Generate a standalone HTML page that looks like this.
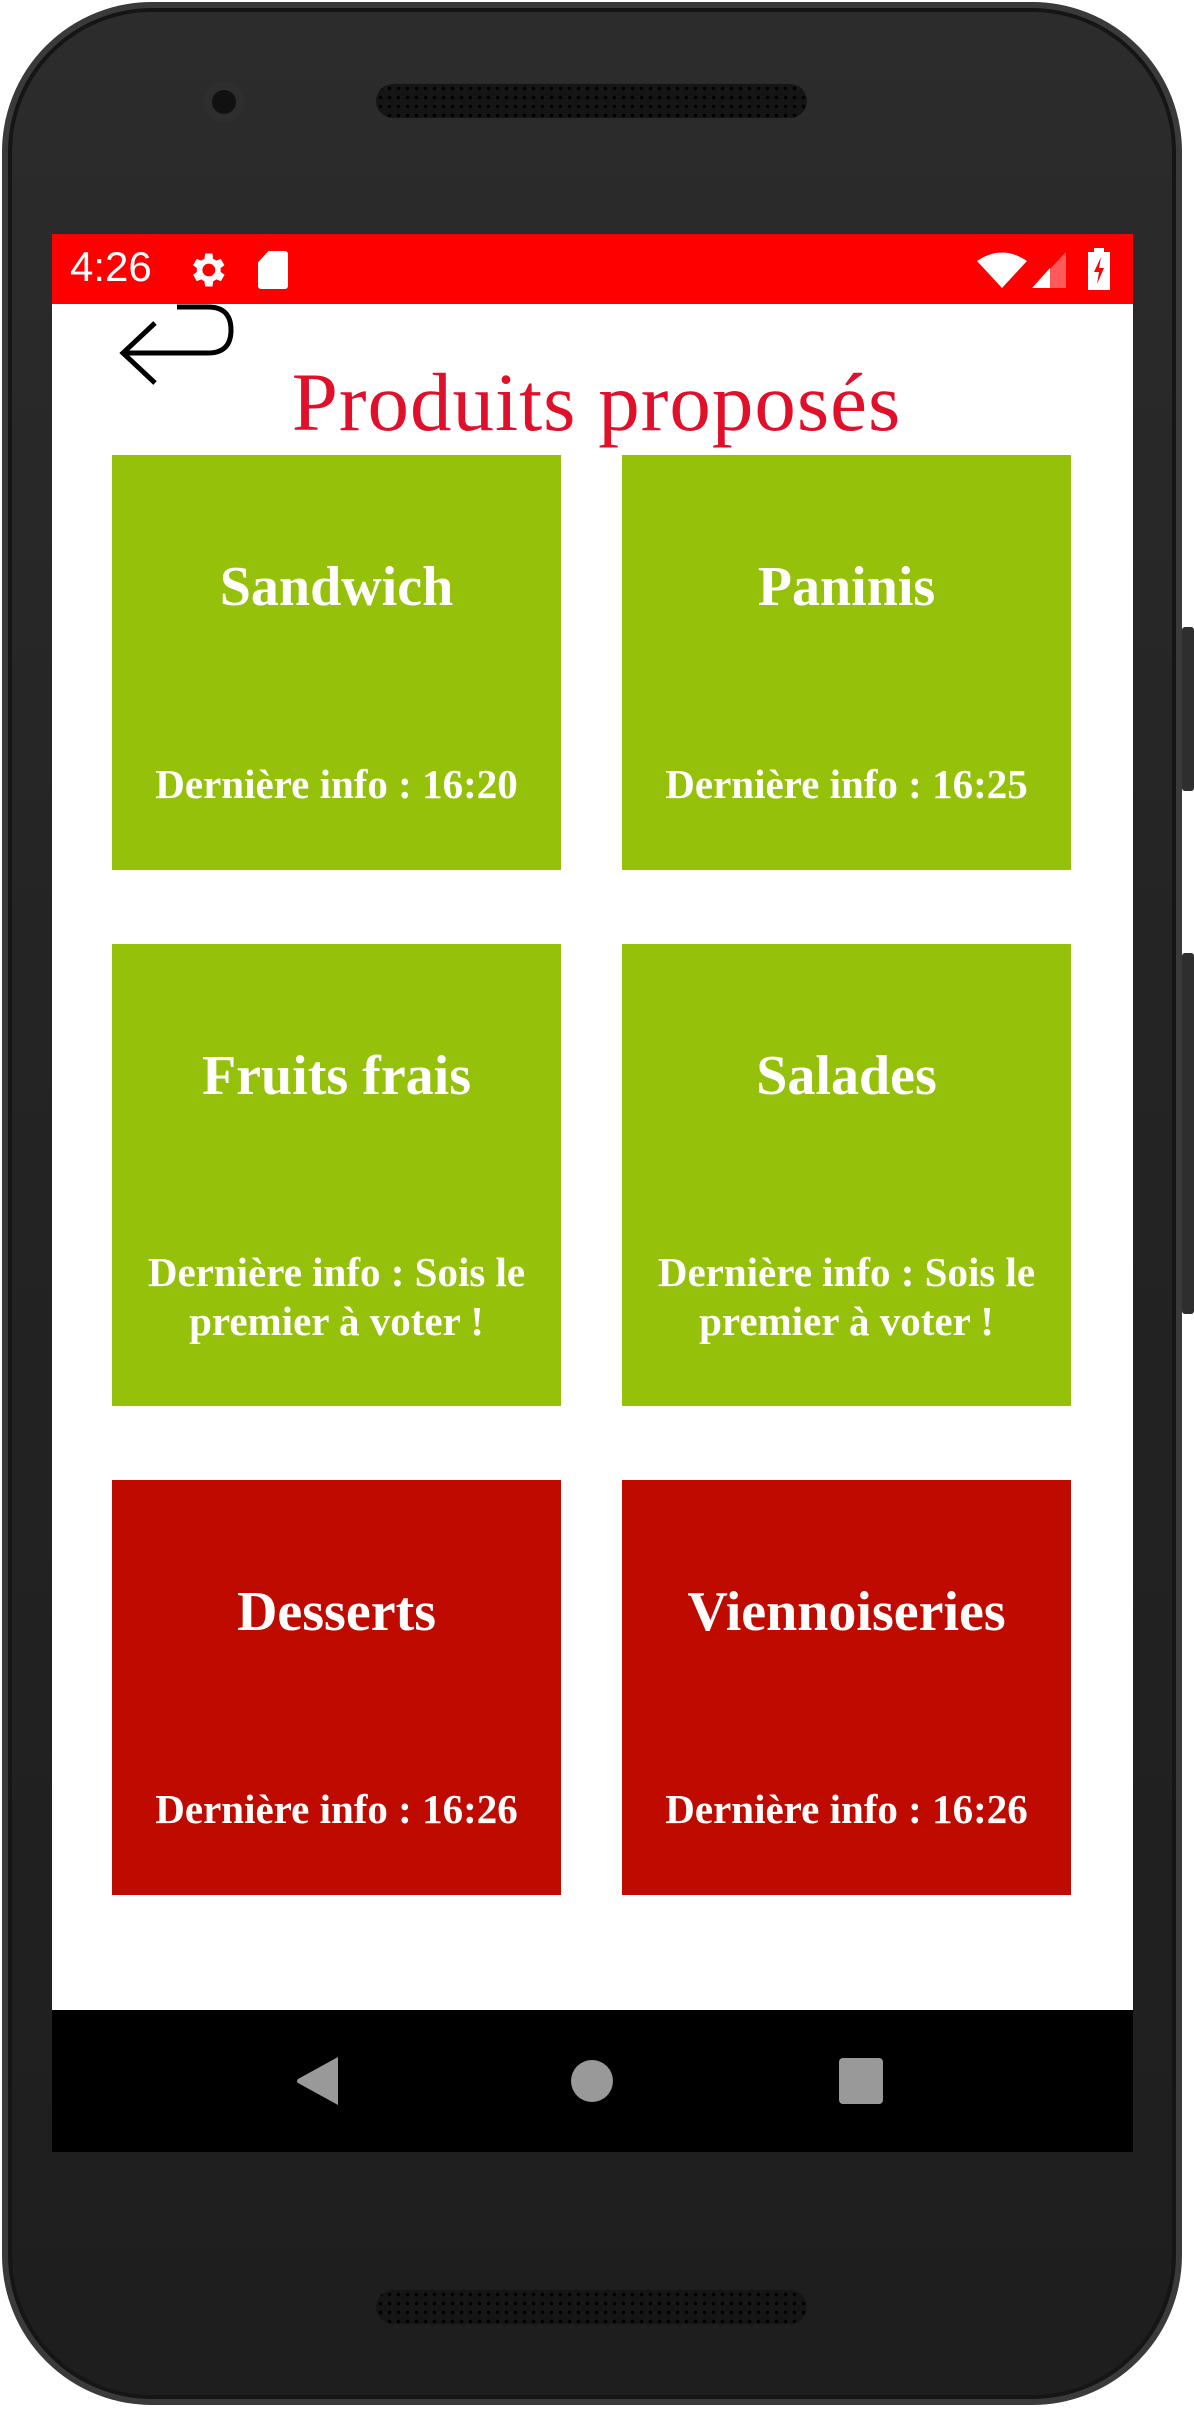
<!DOCTYPE html>
<html><head><meta charset="utf-8"><style>
*{margin:0;padding:0;box-sizing:border-box}
body{width:1194px;height:2409px;background:#fff;position:relative;overflow:hidden;font-family:"Liberation Serif",serif}
.phone{position:absolute;left:2px;top:2px;width:1180px;height:2403px;border-radius:150px;background:linear-gradient(#2c2c2c,#242424 40%,#1e1e1e);border:6px solid #3a3a3a;box-shadow:inset 0 0 0 4px #151515}
.btn{position:absolute;right:0;width:12px;background:#2e2e2e;border-radius:3px}
.screen{position:absolute;left:52px;top:234px;width:1081px;height:1918px;background:#fff}
.status{position:absolute;left:0;top:0;width:100%;height:70px;background:#ff0000;color:#fff}
.nav{position:absolute;left:0;bottom:0;width:100%;height:142px;background:#000}
.card{position:absolute;width:449px;color:#fff;text-align:center;font-weight:bold}
.g{background:#95c10a}.r{background:#bf0a00}
.t{position:absolute;left:0;width:100%;font-size:56px;line-height:60px}
.i{position:absolute;left:0;width:100%;font-size:41px;line-height:49px;white-space:nowrap}
.spk{position:absolute;height:34px;border-radius:17px;background:#151515;background-image:radial-gradient(#000 1.5px,transparent 2px);background-size:9px 9px}
</style></head><body>
<div class="phone"></div>
<div class="btn" style="top:627px;height:164px"></div>
<div class="btn" style="top:953px;height:361px"></div>
<div style="position:absolute;left:203px;top:81px;width:42px;height:42px;border-radius:50%;background:#2e2e2e"></div>
<div style="position:absolute;left:212px;top:90px;width:24px;height:24px;border-radius:50%;background:#111"></div>
<div class="spk" style="left:376px;top:84px;width:431px"></div>
<div class="spk" style="left:376px;top:2290px;width:431px"></div>
<div class="screen">
 <div class="status">
  <div style="position:absolute;left:18px;top:9px;font-family:'Liberation Sans',sans-serif;font-size:42px">4:26</div>
  <svg style="position:absolute;left:133px;top:14px" width="44" height="44" viewBox="0 0 24 24"><path fill="#fff" d="M19.4 13a7.5 7.5 0 000-2l2.1-1.6-2-3.5-2.5 1a7 7 0 00-1.7-1L15 3h-4l-.4 2.9a7 7 0 00-1.7 1l-2.5-1-2 3.5L6.5 11a7.5 7.5 0 000 2l-2.1 1.6 2 3.5 2.5-1a7 7 0 001.7 1L11 21h4l.4-2.9a7 7 0 001.7-1l2.5 1 2-3.5zM13 15.5a3.5 3.5 0 110-7 3.5 3.5 0 010 7z"/></svg>
  <div style="position:absolute;left:206px;top:17px;width:30px;height:38px;background:#fff;border-radius:3px;clip-path:polygon(35% 0,100% 0,100% 100%,0 100%,0 30%)"></div>
  <svg style="position:absolute;left:925px;top:18px" width="50" height="36" viewBox="0 0 50 36"><path fill="#fff" d="M0 9Q25-8 50 9L25 36Z"/></svg>
  <svg style="position:absolute;left:980px;top:18px" width="34" height="36" viewBox="0 0 34 36"><path fill="#fff" d="M34 0V36H0Z" opacity=".35"/><path fill="#fff" d="M18 16V36H0Z"/></svg>
  <svg style="position:absolute;left:1036px;top:14px" width="22" height="42" viewBox="0 0 22 42"><path fill="#fff" d="M6 0H16V4H22V42H0V4H6Z"/><path fill="#f00" d="M13 9L6 24H11L9 36L16 20H11Z"/></svg>
 </div>
 <div style="position:absolute;left:0;top:120px;width:1081px;text-align:center;color:#e0102a;font-size:83px;padding-left:8px;letter-spacing:1px;white-space:nowrap">Produits proposés</div>
 <div class="card g" style="left:60px;top:221px;height:415px"><div class="t" style="top:102px">Sandwich</div><div class="i" style="top:305px">Dernière info : 16:20</div></div>
 <div class="card g" style="left:570px;top:221px;height:415px"><div class="t" style="top:102px">Paninis</div><div class="i" style="top:305px">Dernière info : 16:25</div></div>
 <div class="card g" style="left:60px;top:710px;height:462px"><div class="t" style="top:102px">Fruits frais</div><div class="i" style="top:304px">Dernière info : Sois le<br>premier à voter !</div></div>
 <div class="card g" style="left:570px;top:710px;height:462px"><div class="t" style="top:102px">Salades</div><div class="i" style="top:304px">Dernière info : Sois le<br>premier à voter !</div></div>
 <div class="card r" style="left:60px;top:1246px;height:415px"><div class="t" style="top:102px">Desserts</div><div class="i" style="top:305px">Dernière info : 16:26</div></div>
 <div class="card r" style="left:570px;top:1246px;height:415px"><div class="t" style="top:102px">Viennoiseries</div><div class="i" style="top:305px">Dernière info : 16:26</div></div>
 <div class="nav">
  <svg style="position:absolute;left:244px;top:47px" width="44" height="48" viewBox="0 0 44 48"><path fill="#999" d="M42 0V48L2 26Q0 24 2 22Z"/></svg>
  <div style="position:absolute;left:519px;top:50px;width:42px;height:42px;border-radius:50%;background:#999"></div>
  <div style="position:absolute;left:787px;top:48px;width:44px;height:46px;border-radius:4px;background:#999"></div>
 </div>
</div>
<svg style="position:absolute;left:0;top:0" width="300" height="420" viewBox="0 0 300 420"><path d="M155 323L123 353L155 383M124 353H208Q231 353 231 330Q231 307 208 307H177" fill="none" stroke="#000" stroke-width="5"/></svg>
</body></html>
